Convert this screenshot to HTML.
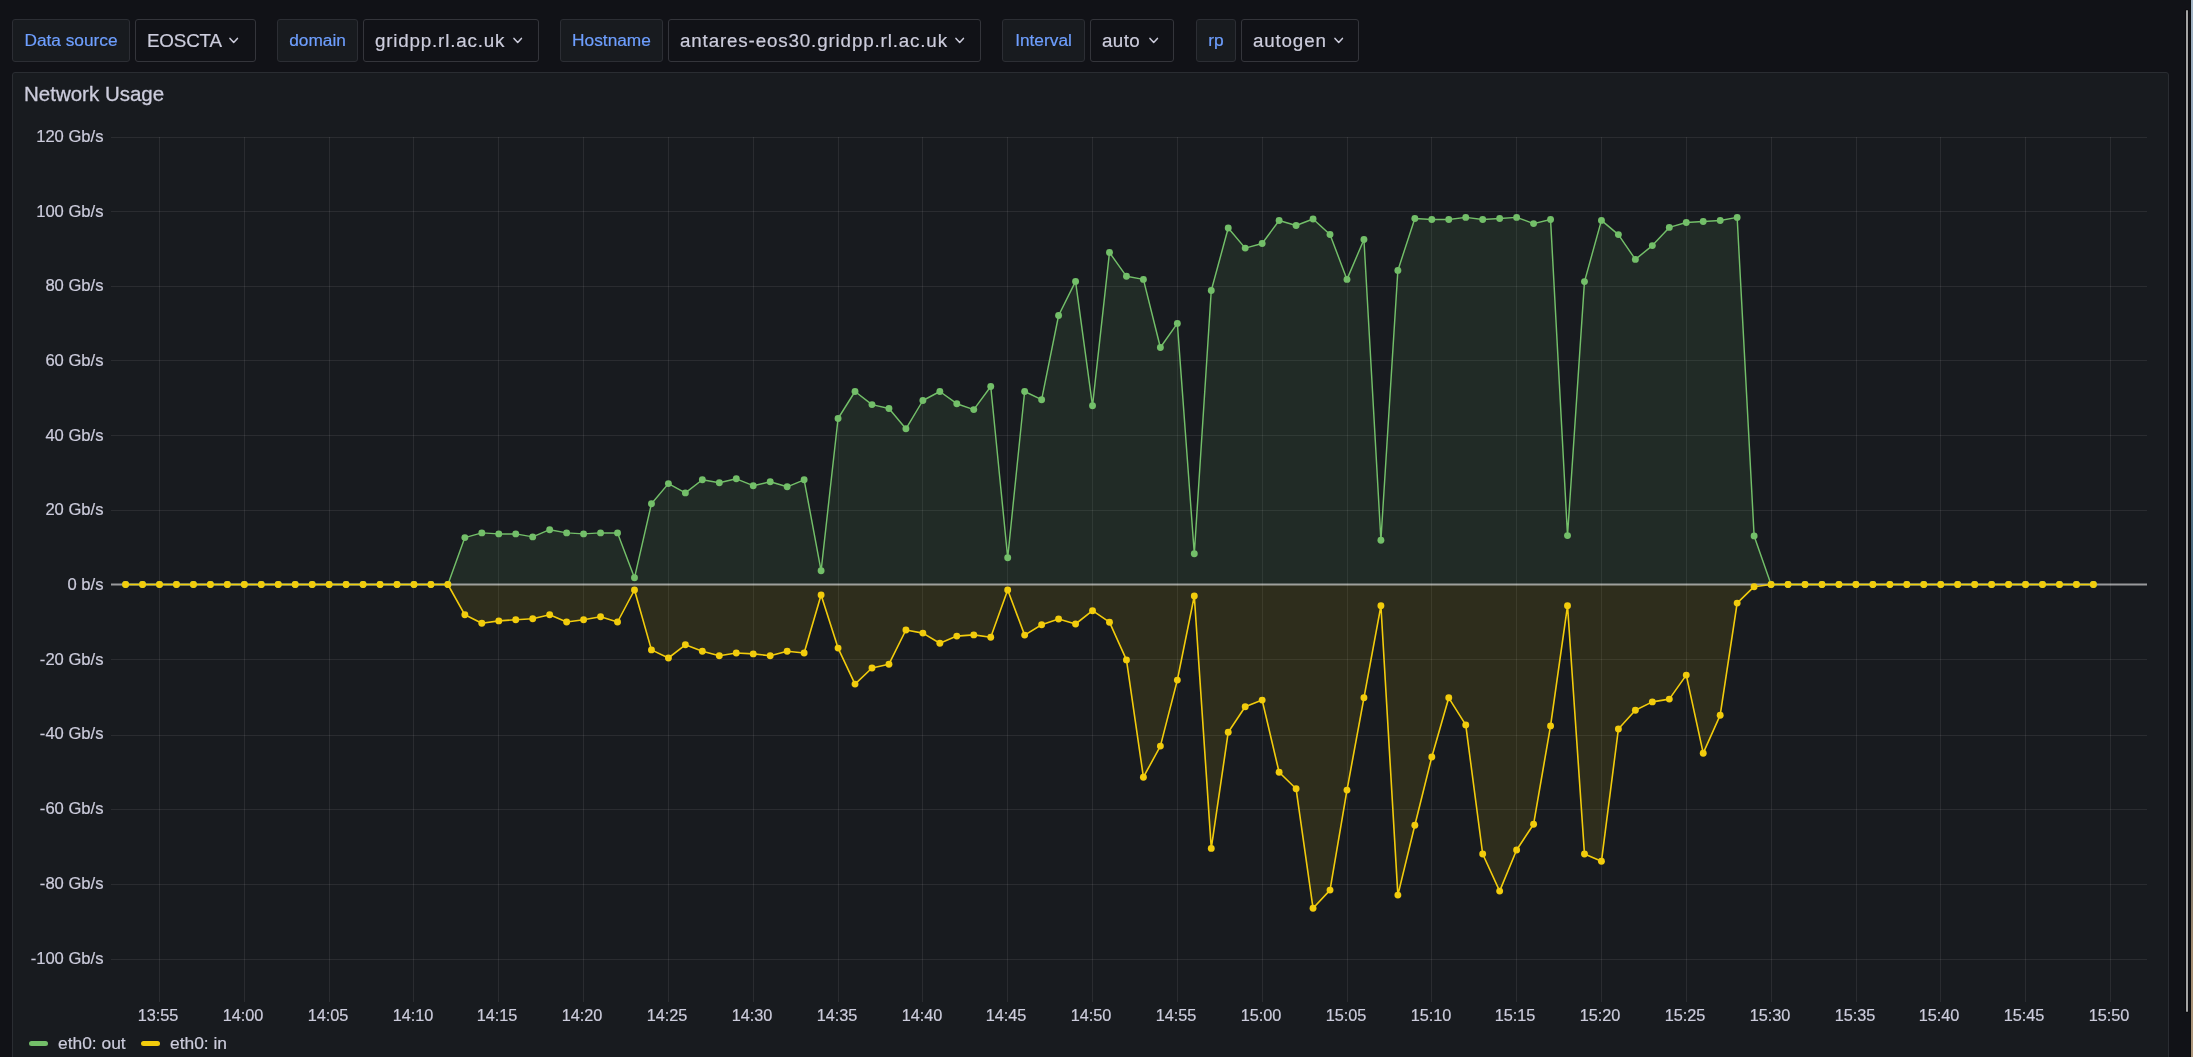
<!DOCTYPE html>
<html><head><meta charset="utf-8"><title>Network Usage</title>
<style>
html,body{margin:0;padding:0;}
body{width:2193px;height:1057px;overflow:hidden;position:relative;background:#111217;font-family:"Liberation Sans",sans-serif;color:#ccccdc;-webkit-font-smoothing:antialiased;}
.lab,.vt,.title,.yl,.xl,.leg{will-change:transform;}
.lab,.vt,.yl,.xl,.leg{-webkit-text-stroke:0.2px currentColor;}
.lab,.val{position:absolute;top:19px;height:43px;box-sizing:border-box;border:1px solid #2c2e34;border-radius:3px;white-space:nowrap;}
.lab{background:#181b1f;color:#6e9fff;font-size:17.3px;line-height:41px;text-align:center;}
.val{background:#111217;border-color:#34353b;}
.vt{position:absolute;top:20px;font-size:18.8px;line-height:41px;white-space:nowrap;}
.chev{position:absolute;top:37px;}
.panel{position:absolute;left:12px;top:72px;width:2157px;height:1100px;box-sizing:border-box;background:#181b1f;border:1px solid #2a2d32;border-radius:3px;}
.title{position:absolute;left:24px;top:82px;font-size:20.5px;-webkit-text-stroke:0.3px #ccccdc;line-height:24px;color:#ccccdc;white-space:nowrap;}
.chart{position:absolute;left:0;top:0;}
.yl{position:absolute;left:0;width:103.5px;text-align:right;font-size:16.6px;line-height:21px;white-space:nowrap;}
.xl{position:absolute;top:1005px;width:100px;text-align:center;font-size:16.3px;line-height:21px;white-space:nowrap;}
.leg{position:absolute;top:1033px;font-size:17.4px;line-height:21px;white-space:nowrap;}
.sw{position:absolute;top:1041px;height:5px;width:19px;border-radius:3px;}
.scroll{position:absolute;left:2186px;top:10px;width:2px;height:1002px;background:#a3a3a3;border-radius:1px;box-shadow:0 0 0 1px rgba(0,0,0,0.35);}
.edge{position:absolute;left:2190px;top:0;width:1px;height:1057px;background:#08090b;}
.strip{position:absolute;left:2191px;top:0;width:2px;height:1057px;background:linear-gradient(#a4b6c6 0%,#8fa2b5 15%,#6a879c 35%,#3e5d70 60%,#5d625f 75%,#a68f73 90%,#b09a7e 100%);}
</style></head><body>
<div class="lab" style="left:12px;width:118px">Data source</div>
<div class="val" style="left:135px;width:121px"></div>
<div class="vt" style="left:147px;letter-spacing:-0.16px">EOSCTA</div>
<svg class="chev" style="left:229.40px" width="10" height="7" viewBox="0 0 10 7"><path d="M1 1.4 L4.7 5.5 L8.4 1.4" fill="none" stroke="#ccccdc" stroke-width="1.5" stroke-linecap="round" stroke-linejoin="round"/></svg>
<div class="lab" style="left:277px;width:81px">domain</div>
<div class="val" style="left:363px;width:176px"></div>
<div class="vt" style="left:375px;letter-spacing:0.81px">gridpp.rl.ac.uk</div>
<svg class="chev" style="left:512.50px" width="10" height="7" viewBox="0 0 10 7"><path d="M1 1.4 L4.7 5.5 L8.4 1.4" fill="none" stroke="#ccccdc" stroke-width="1.5" stroke-linecap="round" stroke-linejoin="round"/></svg>
<div class="lab" style="left:560px;width:103px">Hostname</div>
<div class="val" style="left:668px;width:313px"></div>
<div class="vt" style="left:680px;letter-spacing:0.85px">antares-eos30.gridpp.rl.ac.uk</div>
<svg class="chev" style="left:954.90px" width="10" height="7" viewBox="0 0 10 7"><path d="M1 1.4 L4.7 5.5 L8.4 1.4" fill="none" stroke="#ccccdc" stroke-width="1.5" stroke-linecap="round" stroke-linejoin="round"/></svg>
<div class="lab" style="left:1002px;width:83px">Interval</div>
<div class="val" style="left:1090px;width:84px"></div>
<div class="vt" style="left:1102px;letter-spacing:0.37px">auto</div>
<svg class="chev" style="left:1148.60px" width="10" height="7" viewBox="0 0 10 7"><path d="M1 1.4 L4.7 5.5 L8.4 1.4" fill="none" stroke="#ccccdc" stroke-width="1.5" stroke-linecap="round" stroke-linejoin="round"/></svg>
<div class="lab" style="left:1196px;width:40px">rp</div>
<div class="val" style="left:1241px;width:118px"></div>
<div class="vt" style="left:1253px;letter-spacing:0.83px">autogen</div>
<svg class="chev" style="left:1333.60px" width="10" height="7" viewBox="0 0 10 7"><path d="M1 1.4 L4.7 5.5 L8.4 1.4" fill="none" stroke="#ccccdc" stroke-width="1.5" stroke-linecap="round" stroke-linejoin="round"/></svg>
<div class="panel"></div>
<div class="title">Network Usage</div>
<svg class="chart" width="2193" height="1057" viewBox="0 0 2193 1057">
<g stroke="rgba(255,255,255,0.08)" stroke-width="1" ><line x1="111" y1="137.5" x2="2147" y2="137.5"/><line x1="111" y1="211.5" x2="2147" y2="211.5"/><line x1="111" y1="286.5" x2="2147" y2="286.5"/><line x1="111" y1="360.5" x2="2147" y2="360.5"/><line x1="111" y1="435.5" x2="2147" y2="435.5"/><line x1="111" y1="510.5" x2="2147" y2="510.5"/><line x1="111" y1="659.5" x2="2147" y2="659.5"/><line x1="111" y1="735.5" x2="2147" y2="735.5"/><line x1="111" y1="809.5" x2="2147" y2="809.5"/><line x1="111" y1="884.5" x2="2147" y2="884.5"/><line x1="111" y1="959.5" x2="2147" y2="959.5"/><line x1="159.5" y1="137" x2="159.5" y2="1002"/><line x1="244.5" y1="137" x2="244.5" y2="1002"/><line x1="329.5" y1="137" x2="329.5" y2="1002"/><line x1="413.5" y1="137" x2="413.5" y2="1002"/><line x1="498.5" y1="137" x2="498.5" y2="1002"/><line x1="583.5" y1="137" x2="583.5" y2="1002"/><line x1="668.5" y1="137" x2="668.5" y2="1002"/><line x1="753.5" y1="137" x2="753.5" y2="1002"/><line x1="838.5" y1="137" x2="838.5" y2="1002"/><line x1="922.5" y1="137" x2="922.5" y2="1002"/><line x1="1007.5" y1="137" x2="1007.5" y2="1002"/><line x1="1092.5" y1="137" x2="1092.5" y2="1002"/><line x1="1177.5" y1="137" x2="1177.5" y2="1002"/><line x1="1262.5" y1="137" x2="1262.5" y2="1002"/><line x1="1347.5" y1="137" x2="1347.5" y2="1002"/><line x1="1431.5" y1="137" x2="1431.5" y2="1002"/><line x1="1516.5" y1="137" x2="1516.5" y2="1002"/><line x1="1601.5" y1="137" x2="1601.5" y2="1002"/><line x1="1686.5" y1="137" x2="1686.5" y2="1002"/><line x1="1771.5" y1="137" x2="1771.5" y2="1002"/><line x1="1856.5" y1="137" x2="1856.5" y2="1002"/><line x1="1940.5" y1="137" x2="1940.5" y2="1002"/><line x1="2025.5" y1="137" x2="2025.5" y2="1002"/><line x1="2110.5" y1="137" x2="2110.5" y2="1002"/></g>
<path d="M125.57,584.50 L142.54,584.50 L159.50,584.50 L176.46,584.50 L193.43,584.50 L210.39,584.50 L227.36,584.50 L244.32,584.50 L261.28,584.50 L278.25,584.50 L295.21,584.50 L312.18,584.50 L329.14,584.50 L346.10,584.50 L363.07,584.50 L380.03,584.50 L397.00,584.50 L413.96,584.50 L430.92,584.50 L447.89,584.50 L464.85,537.60 L481.82,532.90 L498.78,533.90 L515.74,533.90 L532.71,536.90 L549.67,529.70 L566.64,532.90 L583.60,533.90 L600.56,532.90 L617.53,532.90 L634.49,577.80 L651.46,503.70 L668.42,483.60 L685.38,492.90 L702.35,479.80 L719.31,482.70 L736.28,478.80 L753.24,485.70 L770.20,481.80 L787.17,486.80 L804.13,479.80 L821.10,570.80 L838.06,418.50 L855.02,391.50 L871.99,404.60 L888.95,408.50 L905.92,428.80 L922.88,400.50 L939.84,391.50 L956.81,403.70 L973.77,409.60 L990.74,386.50 L1007.70,557.70 L1024.66,391.50 L1041.63,399.70 L1058.59,315.50 L1075.56,281.40 L1092.52,405.80 L1109.48,252.50 L1126.45,276.30 L1143.41,279.40 L1160.38,347.50 L1177.34,323.40 L1194.30,553.80 L1211.27,290.50 L1228.23,228.00 L1245.20,248.10 L1262.16,243.50 L1279.12,220.50 L1296.09,225.50 L1313.05,219.00 L1330.02,234.50 L1346.98,279.40 L1363.94,239.50 L1380.91,540.30 L1397.87,270.40 L1414.84,218.50 L1431.80,219.50 L1448.76,219.50 L1465.73,217.40 L1482.69,219.50 L1499.66,218.50 L1516.62,217.40 L1533.58,223.60 L1550.55,219.50 L1567.51,535.60 L1584.48,281.60 L1601.44,220.40 L1618.40,234.60 L1635.37,259.40 L1652.33,245.60 L1669.30,227.40 L1686.26,222.50 L1703.22,221.50 L1720.19,220.50 L1737.15,217.40 L1754.12,535.90 L1771.08,584.50 L1788.04,584.50 L1805.01,584.50 L1821.97,584.50 L1838.94,584.50 L1855.90,584.50 L1872.86,584.50 L1889.83,584.50 L1906.79,584.50 L1923.76,584.50 L1940.72,584.50 L1957.68,584.50 L1974.65,584.50 L1991.61,584.50 L2008.58,584.50 L2025.54,584.50 L2042.50,584.50 L2059.47,584.50 L2076.43,584.50 L2093.40,584.50 L2093.40,584.5 L125.57,584.5 Z" fill="#73bf69" fill-opacity="0.10"/>
<path d="M125.57,584.50 L142.54,584.50 L159.50,584.50 L176.46,584.50 L193.43,584.50 L210.39,584.50 L227.36,584.50 L244.32,584.50 L261.28,584.50 L278.25,584.50 L295.21,584.50 L312.18,584.50 L329.14,584.50 L346.10,584.50 L363.07,584.50 L380.03,584.50 L397.00,584.50 L413.96,584.50 L430.92,584.50 L447.89,584.50 L464.85,614.80 L481.82,623.20 L498.78,620.90 L515.74,619.70 L532.71,618.80 L549.67,614.80 L566.64,622.00 L583.60,619.70 L600.56,616.70 L617.53,622.00 L634.49,590.00 L651.46,649.90 L668.42,658.00 L685.38,644.80 L702.35,651.20 L719.31,655.70 L736.28,653.00 L753.24,653.90 L770.20,655.70 L787.17,651.20 L804.13,653.00 L821.10,595.00 L838.06,648.10 L855.02,684.10 L871.99,668.00 L888.95,664.20 L905.92,630.00 L922.88,633.10 L939.84,643.20 L956.81,636.10 L973.77,634.90 L990.74,637.20 L1007.70,590.00 L1024.66,635.10 L1041.63,624.80 L1058.59,619.00 L1075.56,624.00 L1092.52,610.70 L1109.48,622.20 L1126.45,659.90 L1143.41,777.20 L1160.38,746.10 L1177.34,680.10 L1194.30,596.00 L1211.27,848.40 L1228.23,732.20 L1245.20,706.70 L1262.16,700.10 L1279.12,772.30 L1296.09,788.80 L1313.05,908.30 L1330.02,890.10 L1346.98,790.10 L1363.94,697.80 L1380.91,605.80 L1397.87,895.10 L1414.84,825.20 L1431.80,757.00 L1448.76,697.80 L1465.73,724.90 L1482.69,854.00 L1499.66,891.10 L1516.62,850.00 L1533.58,824.20 L1550.55,725.90 L1567.51,605.80 L1584.48,854.00 L1601.44,861.30 L1618.40,729.00 L1635.37,710.20 L1652.33,701.90 L1669.30,699.10 L1686.26,675.10 L1703.22,753.20 L1720.19,715.20 L1737.15,603.10 L1754.12,586.70 L1771.08,584.50 L1788.04,584.50 L1805.01,584.50 L1821.97,584.50 L1838.94,584.50 L1855.90,584.50 L1872.86,584.50 L1889.83,584.50 L1906.79,584.50 L1923.76,584.50 L1940.72,584.50 L1957.68,584.50 L1974.65,584.50 L1991.61,584.50 L2008.58,584.50 L2025.54,584.50 L2042.50,584.50 L2059.47,584.50 L2076.43,584.50 L2093.40,584.50 L2093.40,584.5 L125.57,584.5 Z" fill="#f2cc0c" fill-opacity="0.10"/>
<line x1="111" y1="584.5" x2="2147" y2="584.5" stroke="rgba(255,255,255,0.56)" stroke-width="2"/>
<path d="M125.57,584.50 L142.54,584.50 L159.50,584.50 L176.46,584.50 L193.43,584.50 L210.39,584.50 L227.36,584.50 L244.32,584.50 L261.28,584.50 L278.25,584.50 L295.21,584.50 L312.18,584.50 L329.14,584.50 L346.10,584.50 L363.07,584.50 L380.03,584.50 L397.00,584.50 L413.96,584.50 L430.92,584.50 L447.89,584.50 L464.85,537.60 L481.82,532.90 L498.78,533.90 L515.74,533.90 L532.71,536.90 L549.67,529.70 L566.64,532.90 L583.60,533.90 L600.56,532.90 L617.53,532.90 L634.49,577.80 L651.46,503.70 L668.42,483.60 L685.38,492.90 L702.35,479.80 L719.31,482.70 L736.28,478.80 L753.24,485.70 L770.20,481.80 L787.17,486.80 L804.13,479.80 L821.10,570.80 L838.06,418.50 L855.02,391.50 L871.99,404.60 L888.95,408.50 L905.92,428.80 L922.88,400.50 L939.84,391.50 L956.81,403.70 L973.77,409.60 L990.74,386.50 L1007.70,557.70 L1024.66,391.50 L1041.63,399.70 L1058.59,315.50 L1075.56,281.40 L1092.52,405.80 L1109.48,252.50 L1126.45,276.30 L1143.41,279.40 L1160.38,347.50 L1177.34,323.40 L1194.30,553.80 L1211.27,290.50 L1228.23,228.00 L1245.20,248.10 L1262.16,243.50 L1279.12,220.50 L1296.09,225.50 L1313.05,219.00 L1330.02,234.50 L1346.98,279.40 L1363.94,239.50 L1380.91,540.30 L1397.87,270.40 L1414.84,218.50 L1431.80,219.50 L1448.76,219.50 L1465.73,217.40 L1482.69,219.50 L1499.66,218.50 L1516.62,217.40 L1533.58,223.60 L1550.55,219.50 L1567.51,535.60 L1584.48,281.60 L1601.44,220.40 L1618.40,234.60 L1635.37,259.40 L1652.33,245.60 L1669.30,227.40 L1686.26,222.50 L1703.22,221.50 L1720.19,220.50 L1737.15,217.40 L1754.12,535.90 L1771.08,584.50 L1788.04,584.50 L1805.01,584.50 L1821.97,584.50 L1838.94,584.50 L1855.90,584.50 L1872.86,584.50 L1889.83,584.50 L1906.79,584.50 L1923.76,584.50 L1940.72,584.50 L1957.68,584.50 L1974.65,584.50 L1991.61,584.50 L2008.58,584.50 L2025.54,584.50 L2042.50,584.50 L2059.47,584.50 L2076.43,584.50 L2093.40,584.50" fill="none" stroke="#73bf69" stroke-width="1.45" stroke-linejoin="round"/>
<g fill="#73bf69"><circle cx="125.57" cy="584.50" r="3.45"/><circle cx="142.54" cy="584.50" r="3.45"/><circle cx="159.50" cy="584.50" r="3.45"/><circle cx="176.46" cy="584.50" r="3.45"/><circle cx="193.43" cy="584.50" r="3.45"/><circle cx="210.39" cy="584.50" r="3.45"/><circle cx="227.36" cy="584.50" r="3.45"/><circle cx="244.32" cy="584.50" r="3.45"/><circle cx="261.28" cy="584.50" r="3.45"/><circle cx="278.25" cy="584.50" r="3.45"/><circle cx="295.21" cy="584.50" r="3.45"/><circle cx="312.18" cy="584.50" r="3.45"/><circle cx="329.14" cy="584.50" r="3.45"/><circle cx="346.10" cy="584.50" r="3.45"/><circle cx="363.07" cy="584.50" r="3.45"/><circle cx="380.03" cy="584.50" r="3.45"/><circle cx="397.00" cy="584.50" r="3.45"/><circle cx="413.96" cy="584.50" r="3.45"/><circle cx="430.92" cy="584.50" r="3.45"/><circle cx="447.89" cy="584.50" r="3.45"/><circle cx="464.85" cy="537.60" r="3.45"/><circle cx="481.82" cy="532.90" r="3.45"/><circle cx="498.78" cy="533.90" r="3.45"/><circle cx="515.74" cy="533.90" r="3.45"/><circle cx="532.71" cy="536.90" r="3.45"/><circle cx="549.67" cy="529.70" r="3.45"/><circle cx="566.64" cy="532.90" r="3.45"/><circle cx="583.60" cy="533.90" r="3.45"/><circle cx="600.56" cy="532.90" r="3.45"/><circle cx="617.53" cy="532.90" r="3.45"/><circle cx="634.49" cy="577.80" r="3.45"/><circle cx="651.46" cy="503.70" r="3.45"/><circle cx="668.42" cy="483.60" r="3.45"/><circle cx="685.38" cy="492.90" r="3.45"/><circle cx="702.35" cy="479.80" r="3.45"/><circle cx="719.31" cy="482.70" r="3.45"/><circle cx="736.28" cy="478.80" r="3.45"/><circle cx="753.24" cy="485.70" r="3.45"/><circle cx="770.20" cy="481.80" r="3.45"/><circle cx="787.17" cy="486.80" r="3.45"/><circle cx="804.13" cy="479.80" r="3.45"/><circle cx="821.10" cy="570.80" r="3.45"/><circle cx="838.06" cy="418.50" r="3.45"/><circle cx="855.02" cy="391.50" r="3.45"/><circle cx="871.99" cy="404.60" r="3.45"/><circle cx="888.95" cy="408.50" r="3.45"/><circle cx="905.92" cy="428.80" r="3.45"/><circle cx="922.88" cy="400.50" r="3.45"/><circle cx="939.84" cy="391.50" r="3.45"/><circle cx="956.81" cy="403.70" r="3.45"/><circle cx="973.77" cy="409.60" r="3.45"/><circle cx="990.74" cy="386.50" r="3.45"/><circle cx="1007.70" cy="557.70" r="3.45"/><circle cx="1024.66" cy="391.50" r="3.45"/><circle cx="1041.63" cy="399.70" r="3.45"/><circle cx="1058.59" cy="315.50" r="3.45"/><circle cx="1075.56" cy="281.40" r="3.45"/><circle cx="1092.52" cy="405.80" r="3.45"/><circle cx="1109.48" cy="252.50" r="3.45"/><circle cx="1126.45" cy="276.30" r="3.45"/><circle cx="1143.41" cy="279.40" r="3.45"/><circle cx="1160.38" cy="347.50" r="3.45"/><circle cx="1177.34" cy="323.40" r="3.45"/><circle cx="1194.30" cy="553.80" r="3.45"/><circle cx="1211.27" cy="290.50" r="3.45"/><circle cx="1228.23" cy="228.00" r="3.45"/><circle cx="1245.20" cy="248.10" r="3.45"/><circle cx="1262.16" cy="243.50" r="3.45"/><circle cx="1279.12" cy="220.50" r="3.45"/><circle cx="1296.09" cy="225.50" r="3.45"/><circle cx="1313.05" cy="219.00" r="3.45"/><circle cx="1330.02" cy="234.50" r="3.45"/><circle cx="1346.98" cy="279.40" r="3.45"/><circle cx="1363.94" cy="239.50" r="3.45"/><circle cx="1380.91" cy="540.30" r="3.45"/><circle cx="1397.87" cy="270.40" r="3.45"/><circle cx="1414.84" cy="218.50" r="3.45"/><circle cx="1431.80" cy="219.50" r="3.45"/><circle cx="1448.76" cy="219.50" r="3.45"/><circle cx="1465.73" cy="217.40" r="3.45"/><circle cx="1482.69" cy="219.50" r="3.45"/><circle cx="1499.66" cy="218.50" r="3.45"/><circle cx="1516.62" cy="217.40" r="3.45"/><circle cx="1533.58" cy="223.60" r="3.45"/><circle cx="1550.55" cy="219.50" r="3.45"/><circle cx="1567.51" cy="535.60" r="3.45"/><circle cx="1584.48" cy="281.60" r="3.45"/><circle cx="1601.44" cy="220.40" r="3.45"/><circle cx="1618.40" cy="234.60" r="3.45"/><circle cx="1635.37" cy="259.40" r="3.45"/><circle cx="1652.33" cy="245.60" r="3.45"/><circle cx="1669.30" cy="227.40" r="3.45"/><circle cx="1686.26" cy="222.50" r="3.45"/><circle cx="1703.22" cy="221.50" r="3.45"/><circle cx="1720.19" cy="220.50" r="3.45"/><circle cx="1737.15" cy="217.40" r="3.45"/><circle cx="1754.12" cy="535.90" r="3.45"/><circle cx="1771.08" cy="584.50" r="3.45"/><circle cx="1788.04" cy="584.50" r="3.45"/><circle cx="1805.01" cy="584.50" r="3.45"/><circle cx="1821.97" cy="584.50" r="3.45"/><circle cx="1838.94" cy="584.50" r="3.45"/><circle cx="1855.90" cy="584.50" r="3.45"/><circle cx="1872.86" cy="584.50" r="3.45"/><circle cx="1889.83" cy="584.50" r="3.45"/><circle cx="1906.79" cy="584.50" r="3.45"/><circle cx="1923.76" cy="584.50" r="3.45"/><circle cx="1940.72" cy="584.50" r="3.45"/><circle cx="1957.68" cy="584.50" r="3.45"/><circle cx="1974.65" cy="584.50" r="3.45"/><circle cx="1991.61" cy="584.50" r="3.45"/><circle cx="2008.58" cy="584.50" r="3.45"/><circle cx="2025.54" cy="584.50" r="3.45"/><circle cx="2042.50" cy="584.50" r="3.45"/><circle cx="2059.47" cy="584.50" r="3.45"/><circle cx="2076.43" cy="584.50" r="3.45"/><circle cx="2093.40" cy="584.50" r="3.45"/></g>
<path d="M125.57,584.50 L142.54,584.50 L159.50,584.50 L176.46,584.50 L193.43,584.50 L210.39,584.50 L227.36,584.50 L244.32,584.50 L261.28,584.50 L278.25,584.50 L295.21,584.50 L312.18,584.50 L329.14,584.50 L346.10,584.50 L363.07,584.50 L380.03,584.50 L397.00,584.50 L413.96,584.50 L430.92,584.50 L447.89,584.50 L464.85,614.80 L481.82,623.20 L498.78,620.90 L515.74,619.70 L532.71,618.80 L549.67,614.80 L566.64,622.00 L583.60,619.70 L600.56,616.70 L617.53,622.00 L634.49,590.00 L651.46,649.90 L668.42,658.00 L685.38,644.80 L702.35,651.20 L719.31,655.70 L736.28,653.00 L753.24,653.90 L770.20,655.70 L787.17,651.20 L804.13,653.00 L821.10,595.00 L838.06,648.10 L855.02,684.10 L871.99,668.00 L888.95,664.20 L905.92,630.00 L922.88,633.10 L939.84,643.20 L956.81,636.10 L973.77,634.90 L990.74,637.20 L1007.70,590.00 L1024.66,635.10 L1041.63,624.80 L1058.59,619.00 L1075.56,624.00 L1092.52,610.70 L1109.48,622.20 L1126.45,659.90 L1143.41,777.20 L1160.38,746.10 L1177.34,680.10 L1194.30,596.00 L1211.27,848.40 L1228.23,732.20 L1245.20,706.70 L1262.16,700.10 L1279.12,772.30 L1296.09,788.80 L1313.05,908.30 L1330.02,890.10 L1346.98,790.10 L1363.94,697.80 L1380.91,605.80 L1397.87,895.10 L1414.84,825.20 L1431.80,757.00 L1448.76,697.80 L1465.73,724.90 L1482.69,854.00 L1499.66,891.10 L1516.62,850.00 L1533.58,824.20 L1550.55,725.90 L1567.51,605.80 L1584.48,854.00 L1601.44,861.30 L1618.40,729.00 L1635.37,710.20 L1652.33,701.90 L1669.30,699.10 L1686.26,675.10 L1703.22,753.20 L1720.19,715.20 L1737.15,603.10 L1754.12,586.70 L1771.08,584.50 L1788.04,584.50 L1805.01,584.50 L1821.97,584.50 L1838.94,584.50 L1855.90,584.50 L1872.86,584.50 L1889.83,584.50 L1906.79,584.50 L1923.76,584.50 L1940.72,584.50 L1957.68,584.50 L1974.65,584.50 L1991.61,584.50 L2008.58,584.50 L2025.54,584.50 L2042.50,584.50 L2059.47,584.50 L2076.43,584.50 L2093.40,584.50" fill="none" stroke="#f2cc0c" stroke-width="1.6" stroke-linejoin="round"/>
<g fill="#f2cc0c"><circle cx="125.57" cy="584.50" r="3.45"/><circle cx="142.54" cy="584.50" r="3.45"/><circle cx="159.50" cy="584.50" r="3.45"/><circle cx="176.46" cy="584.50" r="3.45"/><circle cx="193.43" cy="584.50" r="3.45"/><circle cx="210.39" cy="584.50" r="3.45"/><circle cx="227.36" cy="584.50" r="3.45"/><circle cx="244.32" cy="584.50" r="3.45"/><circle cx="261.28" cy="584.50" r="3.45"/><circle cx="278.25" cy="584.50" r="3.45"/><circle cx="295.21" cy="584.50" r="3.45"/><circle cx="312.18" cy="584.50" r="3.45"/><circle cx="329.14" cy="584.50" r="3.45"/><circle cx="346.10" cy="584.50" r="3.45"/><circle cx="363.07" cy="584.50" r="3.45"/><circle cx="380.03" cy="584.50" r="3.45"/><circle cx="397.00" cy="584.50" r="3.45"/><circle cx="413.96" cy="584.50" r="3.45"/><circle cx="430.92" cy="584.50" r="3.45"/><circle cx="447.89" cy="584.50" r="3.45"/><circle cx="464.85" cy="614.80" r="3.45"/><circle cx="481.82" cy="623.20" r="3.45"/><circle cx="498.78" cy="620.90" r="3.45"/><circle cx="515.74" cy="619.70" r="3.45"/><circle cx="532.71" cy="618.80" r="3.45"/><circle cx="549.67" cy="614.80" r="3.45"/><circle cx="566.64" cy="622.00" r="3.45"/><circle cx="583.60" cy="619.70" r="3.45"/><circle cx="600.56" cy="616.70" r="3.45"/><circle cx="617.53" cy="622.00" r="3.45"/><circle cx="634.49" cy="590.00" r="3.45"/><circle cx="651.46" cy="649.90" r="3.45"/><circle cx="668.42" cy="658.00" r="3.45"/><circle cx="685.38" cy="644.80" r="3.45"/><circle cx="702.35" cy="651.20" r="3.45"/><circle cx="719.31" cy="655.70" r="3.45"/><circle cx="736.28" cy="653.00" r="3.45"/><circle cx="753.24" cy="653.90" r="3.45"/><circle cx="770.20" cy="655.70" r="3.45"/><circle cx="787.17" cy="651.20" r="3.45"/><circle cx="804.13" cy="653.00" r="3.45"/><circle cx="821.10" cy="595.00" r="3.45"/><circle cx="838.06" cy="648.10" r="3.45"/><circle cx="855.02" cy="684.10" r="3.45"/><circle cx="871.99" cy="668.00" r="3.45"/><circle cx="888.95" cy="664.20" r="3.45"/><circle cx="905.92" cy="630.00" r="3.45"/><circle cx="922.88" cy="633.10" r="3.45"/><circle cx="939.84" cy="643.20" r="3.45"/><circle cx="956.81" cy="636.10" r="3.45"/><circle cx="973.77" cy="634.90" r="3.45"/><circle cx="990.74" cy="637.20" r="3.45"/><circle cx="1007.70" cy="590.00" r="3.45"/><circle cx="1024.66" cy="635.10" r="3.45"/><circle cx="1041.63" cy="624.80" r="3.45"/><circle cx="1058.59" cy="619.00" r="3.45"/><circle cx="1075.56" cy="624.00" r="3.45"/><circle cx="1092.52" cy="610.70" r="3.45"/><circle cx="1109.48" cy="622.20" r="3.45"/><circle cx="1126.45" cy="659.90" r="3.45"/><circle cx="1143.41" cy="777.20" r="3.45"/><circle cx="1160.38" cy="746.10" r="3.45"/><circle cx="1177.34" cy="680.10" r="3.45"/><circle cx="1194.30" cy="596.00" r="3.45"/><circle cx="1211.27" cy="848.40" r="3.45"/><circle cx="1228.23" cy="732.20" r="3.45"/><circle cx="1245.20" cy="706.70" r="3.45"/><circle cx="1262.16" cy="700.10" r="3.45"/><circle cx="1279.12" cy="772.30" r="3.45"/><circle cx="1296.09" cy="788.80" r="3.45"/><circle cx="1313.05" cy="908.30" r="3.45"/><circle cx="1330.02" cy="890.10" r="3.45"/><circle cx="1346.98" cy="790.10" r="3.45"/><circle cx="1363.94" cy="697.80" r="3.45"/><circle cx="1380.91" cy="605.80" r="3.45"/><circle cx="1397.87" cy="895.10" r="3.45"/><circle cx="1414.84" cy="825.20" r="3.45"/><circle cx="1431.80" cy="757.00" r="3.45"/><circle cx="1448.76" cy="697.80" r="3.45"/><circle cx="1465.73" cy="724.90" r="3.45"/><circle cx="1482.69" cy="854.00" r="3.45"/><circle cx="1499.66" cy="891.10" r="3.45"/><circle cx="1516.62" cy="850.00" r="3.45"/><circle cx="1533.58" cy="824.20" r="3.45"/><circle cx="1550.55" cy="725.90" r="3.45"/><circle cx="1567.51" cy="605.80" r="3.45"/><circle cx="1584.48" cy="854.00" r="3.45"/><circle cx="1601.44" cy="861.30" r="3.45"/><circle cx="1618.40" cy="729.00" r="3.45"/><circle cx="1635.37" cy="710.20" r="3.45"/><circle cx="1652.33" cy="701.90" r="3.45"/><circle cx="1669.30" cy="699.10" r="3.45"/><circle cx="1686.26" cy="675.10" r="3.45"/><circle cx="1703.22" cy="753.20" r="3.45"/><circle cx="1720.19" cy="715.20" r="3.45"/><circle cx="1737.15" cy="603.10" r="3.45"/><circle cx="1754.12" cy="586.70" r="3.45"/><circle cx="1771.08" cy="584.50" r="3.45"/><circle cx="1788.04" cy="584.50" r="3.45"/><circle cx="1805.01" cy="584.50" r="3.45"/><circle cx="1821.97" cy="584.50" r="3.45"/><circle cx="1838.94" cy="584.50" r="3.45"/><circle cx="1855.90" cy="584.50" r="3.45"/><circle cx="1872.86" cy="584.50" r="3.45"/><circle cx="1889.83" cy="584.50" r="3.45"/><circle cx="1906.79" cy="584.50" r="3.45"/><circle cx="1923.76" cy="584.50" r="3.45"/><circle cx="1940.72" cy="584.50" r="3.45"/><circle cx="1957.68" cy="584.50" r="3.45"/><circle cx="1974.65" cy="584.50" r="3.45"/><circle cx="1991.61" cy="584.50" r="3.45"/><circle cx="2008.58" cy="584.50" r="3.45"/><circle cx="2025.54" cy="584.50" r="3.45"/><circle cx="2042.50" cy="584.50" r="3.45"/><circle cx="2059.47" cy="584.50" r="3.45"/><circle cx="2076.43" cy="584.50" r="3.45"/><circle cx="2093.40" cy="584.50" r="3.45"/></g>
</svg>
<div class="yl" style="top:125.80px">120 Gb/s</div>
<div class="yl" style="top:200.50px">100 Gb/s</div>
<div class="yl" style="top:275.20px">80 Gb/s</div>
<div class="yl" style="top:349.90px">60 Gb/s</div>
<div class="yl" style="top:424.60px">40 Gb/s</div>
<div class="yl" style="top:499.30px">20 Gb/s</div>
<div class="yl" style="top:574.00px">0 b/s</div>
<div class="yl" style="top:648.70px">-20 Gb/s</div>
<div class="yl" style="top:723.40px">-40 Gb/s</div>
<div class="yl" style="top:798.10px">-60 Gb/s</div>
<div class="yl" style="top:872.80px">-80 Gb/s</div>
<div class="yl" style="top:947.50px">-100 Gb/s</div>
<div class="xl" style="left:108.20px">13:55</div>
<div class="xl" style="left:193.02px">14:00</div>
<div class="xl" style="left:277.84px">14:05</div>
<div class="xl" style="left:362.66px">14:10</div>
<div class="xl" style="left:447.48px">14:15</div>
<div class="xl" style="left:532.30px">14:20</div>
<div class="xl" style="left:617.12px">14:25</div>
<div class="xl" style="left:701.94px">14:30</div>
<div class="xl" style="left:786.76px">14:35</div>
<div class="xl" style="left:871.58px">14:40</div>
<div class="xl" style="left:956.40px">14:45</div>
<div class="xl" style="left:1041.22px">14:50</div>
<div class="xl" style="left:1126.04px">14:55</div>
<div class="xl" style="left:1210.86px">15:00</div>
<div class="xl" style="left:1295.68px">15:05</div>
<div class="xl" style="left:1380.50px">15:10</div>
<div class="xl" style="left:1465.32px">15:15</div>
<div class="xl" style="left:1550.14px">15:20</div>
<div class="xl" style="left:1634.96px">15:25</div>
<div class="xl" style="left:1719.78px">15:30</div>
<div class="xl" style="left:1804.60px">15:35</div>
<div class="xl" style="left:1889.42px">15:40</div>
<div class="xl" style="left:1974.24px">15:45</div>
<div class="xl" style="left:2059.06px">15:50</div>
<div class="sw" style="left:29px;background:#73bf69"></div>
<div class="leg" style="left:58px">eth0: out</div>
<div class="sw" style="left:141px;background:#f2cc0c"></div>
<div class="leg" style="left:170px">eth0: in</div>
<div class="scroll"></div>
<div class="edge"></div>
<div class="strip"></div>
</body></html>
